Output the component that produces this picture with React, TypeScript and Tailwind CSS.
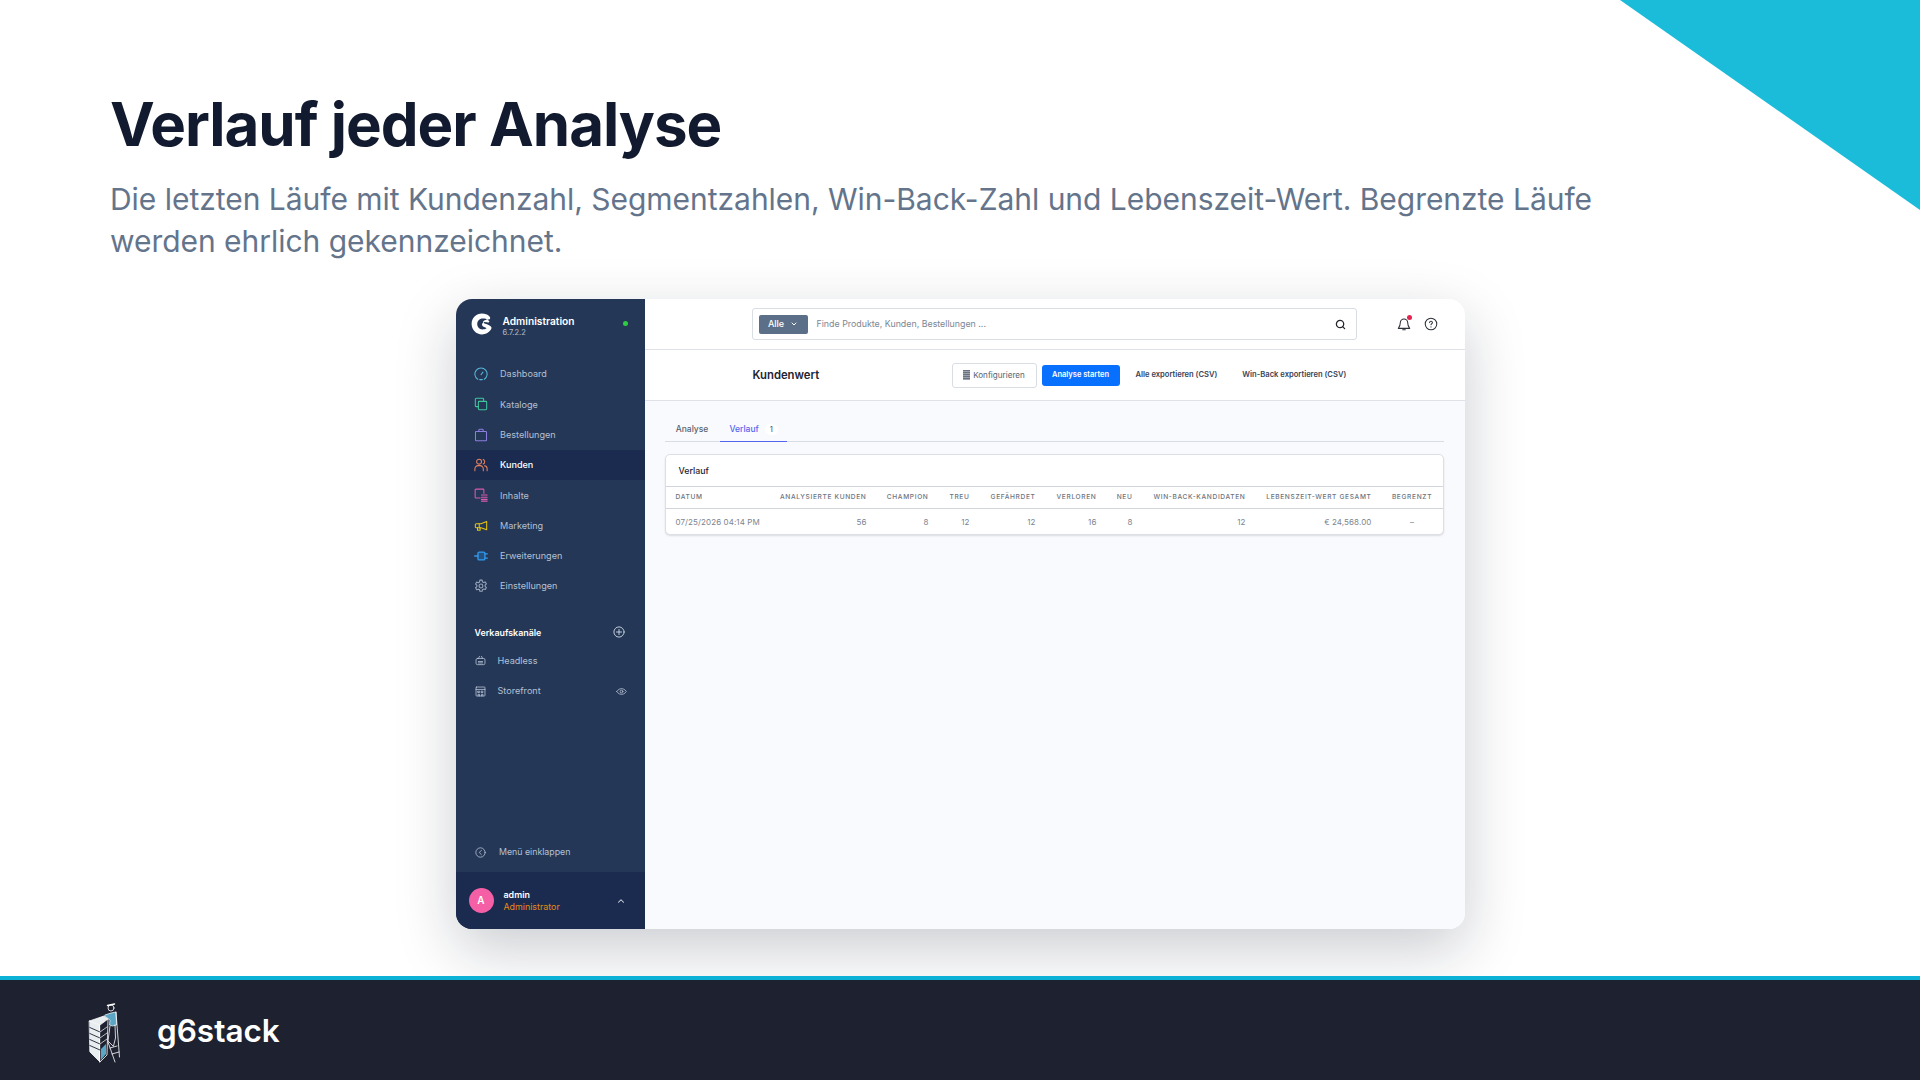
import { ChevronDown, ChevronUp, Search } from "lucide-react";
import type { ReactNode } from "react";

const font = "font-['Inter','Noto_Sans',sans-serif]";

function Ico({ className, children, size = 15 }: { className?: string; children: ReactNode; size?: number }) {
  return (
    <svg
      width={size}
      height={size}
      viewBox="0 0 16 16"
      fill="none"
      stroke="currentColor"
      strokeWidth="1.2"
      strokeLinecap="round"
      strokeLinejoin="round"
      className={className}
    >
      {children}
    </svg>
  );
}

const navItems: { label: string; color: string; active?: boolean; icon: ReactNode }[] = [
  {
    label: "Dashboard",
    color: "text-[#57b7d8]",
    icon: (
      <>
        <path d="M4.3 14A7 7 0 1 1 11.7 14" />
        <path d="M6.5 14.4h3" />
        <path d="M8 8.8l2.2-3" />
      </>
    ),
  },
  {
    label: "Kataloge",
    color: "text-[#3fc79c]",
    icon: (
      <>
        <path d="M5 11H2.5a1 1 0 0 1-1-1V2.5a1 1 0 0 1 1-1H10a1 1 0 0 1 1 1V5" />
        <rect x="5" y="5" width="9.5" height="9.5" rx="1" />
      </>
    ),
  },
  {
    label: "Bestellungen",
    color: "text-[#8c7fe0]",
    icon: (
      <>
        <path d="M2.5 4h11a.8.8 0 0 1 .8.8v9a.8.8 0 0 1-.8.8h-11a.8.8 0 0 1-.8-.8v-9a.8.8 0 0 1 .8-.8z" />
        <path d="M5.5 4V2.5a1 1 0 0 1 1-1h3a1 1 0 0 1 1 1V4" />
      </>
    ),
  },
  {
    label: "Kunden",
    color: "text-[#e8825f]",
    active: true,
    icon: (
      <>
        <circle cx="5.8" cy="4.2" r="2.8" />
        <path d="M1 14.5v-2.2a3.6 3.6 0 0 1 3.6-3.6h2.4a3.6 3.6 0 0 1 3.6 3.6v2.2" />
        <path d="M10.5 1.6a2.8 2.8 0 0 1 0 5.2" />
        <path d="M12 8.9a3.4 3.4 0 0 1 3 3.4v2.2" />
      </>
    ),
  },
  {
    label: "Inhalte",
    color: "text-[#d95bb0]",
    icon: (
      <>
        <path d="M7 11.5H2.3a1 1 0 0 1-1-1V2.3a1 1 0 0 1 1-1h8a1 1 0 0 1 1 1V6" />
        <path d="M8.5 8h6.5M8.5 10.5h6.5M8.5 13h6.5M8.5 15h6.5" />
      </>
    ),
  },
  {
    label: "Marketing",
    color: "text-[#e6c412]",
    icon: (
      <>
        <path d="M14.5 2.8v9.4L8 10H2.5a1 1 0 0 1-1-1V6.5a1 1 0 0 1 1-1H8z" />
        <path d="M4 10v2.8h3V10M6 5.5V10" />
      </>
    ),
  },
  {
    label: "Erweiterungen",
    color: "text-[#2f9bf0]",
    icon: (
      <>
        <rect x="4.5" y="3.5" width="8" height="9" rx="1.5" fill="currentColor" fillOpacity="0.25" strokeWidth="1.5" />
        <path d="M.8 8h3.7M12.5 5.5h2.7M12.5 10.5h2.7" strokeWidth="1.5" />
      </>
    ),
  },
  {
    label: "Einstellungen",
    color: "text-[#9aa8bd]",
    icon: (
      <>
        <circle cx="8" cy="8" r="2.2" />
        <path d="M6.7 1.3h2.6l.4 2 1.3.7 1.9-.7 1.3 2.3-1.5 1.3v1.6l1.5 1.3-1.3 2.3-1.9-.7-1.3.7-.4 2H6.7l-.4-2L5 11.6l-1.9.7-1.3-2.3 1.5-1.3V7.1L1.8 5.8l1.3-2.3 1.9.7 1.3-.7z" />
      </>
    ),
  },
];

const rows = [
  { label: "DATUM", value: "07/25/2026 04:14 PM", align: "text-left" },
  { label: "ANALYSIERTE KUNDEN", value: "56", align: "text-right" },
  { label: "CHAMPION", value: "8", align: "text-right" },
  { label: "TREU", value: "12", align: "text-right" },
  { label: "GEFÄHRDET", value: "12", align: "text-right" },
  { label: "VERLOREN", value: "16", align: "text-right" },
  { label: "NEU", value: "8", align: "text-right" },
  { label: "WIN-BACK-KANDIDATEN", value: "12", align: "text-right" },
  { label: "LEBENSZEIT-WERT GESAMT", value: "€ 24,568.00", align: "text-right" },
  { label: "BEGRENZT", value: "–", align: "pl-[20px] text-center" },
];

const gridCols = "grid-cols-[100px_91px_62px_41px_66px_61px_36px_113px_126px_61px]";

function Sidebar() {
  return (
    <aside className="flex w-[189px] shrink-0 flex-col bg-[#243757]">
      <div className="flex h-[50px] items-center pl-[15px] pr-[17px]">
        <svg width="22" height="22" viewBox="0 0 22 22" className="shrink-0">
          <path
            d="M18.5 3.4C16.5 1.5 14 .6 11 .6C5.2.6.6 5.2.6 11C.6 16.8 5.2 21.4 11 21.4C14.6 21.4 17.7 19.7 19.6 17C20.8 15.4 20.8 14 19.6 13.2C17.6 11.8 15.5 11 13.6 10.4C12.2 10 12.4 8.8 13.6 8.9C15 9 16 9.3 17.5 9.4C18.3 9.4 18.6 8.8 18.2 8.2C17.2 7 15.6 6.2 13.8 5.6C12.8 5.4 11.6 5.4 10.6 5.6C8 6.2 6.2 8.4 6.2 11C6.2 13.8 8.4 16.4 11.4 16.4C13 16.4 14.6 16 15.6 15.2C15 14.8 14 14.4 13 14C11.8 13.6 11 12.8 11 11.6C11 10.8 11.4 10.2 12 9.8C11.8 9 12.2 8 13.2 7.4C15 6.6 17 6.4 18.6 6.2C19.4 5.8 19.4 4.4 18.5 3.4Z"
            fill="#fff"
            fillRule="evenodd"
          />
        </svg>
        <div className="ml-[10px] mt-[3px] flex flex-1 flex-col">
          <span className="text-[10.2px] leading-[13px] font-semibold text-white">Administration</span>
          <span className="text-[7.5px] leading-[9px] text-[#b4c0d2]">6.7.2.2</span>
        </div>
        <span className="mb-[2px] h-[5px] w-[5px] rounded-full bg-[#2ecc40]" />
      </div>
      <nav className="mt-[10px] flex flex-col">
        {navItems.map((item) => (
          <div
            key={item.label}
            className={`flex h-[30.3px] items-center pl-[18px] ${item.active ? "bg-[#1a2b4f]" : ""}`}
          >
            <Ico className={`${item.color} shrink-0`} size={14}>
              {item.icon}
            </Ico>
            <span
              className={`ml-[12.5px] text-[9.1px] ${item.active ? "font-medium text-white" : "text-[#b4c0d2]"}`}
            >
              {item.label}
            </span>
          </div>
        ))}
      </nav>
      <div className="mt-[24px] flex h-[14px] items-center justify-between pl-[19px] pr-[20px]">
        <span className="text-[8.9px] font-semibold text-white">Verkaufskanäle</span>
        <Ico className="text-[#d5dce6]" size={12}>
          <circle cx="8" cy="8" r="6.8" />
          <path d="M8 4.6v6.8M4.6 8h6.8" />
        </Ico>
      </div>
      <div className="mt-[6px] flex h-[30px] items-center pl-[19px]">
        <Ico className="shrink-0 text-[#b4c0d2]" size={11}>
          <rect x="1.5" y="5" width="13" height="9" rx="2" />
          <path d="M5 5l1.5-3M11 5L9.5 2M5 9.5h6M5 11.5h6" />
        </Ico>
        <span className="ml-[12px] text-[9.1px] text-[#b4c0d2]">Headless</span>
      </div>
      <div className="flex h-[31.5px] items-center pl-[19px] pr-[18px]">
        <Ico className="shrink-0 text-[#b4c0d2]" size={11}>
          <rect x="1.5" y="1.5" width="13" height="13" rx="0.8" />
          <path d="M1.5 5h13M4.5 7.5h2v2h-2zM9.5 7.5h2v2h-2zM4.5 14.5v-2.5h2v2.5M9.5 14.5v-2.5h2v2.5" />
        </Ico>
        <span className="ml-[12px] flex-1 text-[9.1px] text-[#b4c0d2]">Storefront</span>
        <Ico className="text-[#b4c0d2]" size={11}>
          <path d="M1 8s2.5-4.2 7-4.2S15 8 15 8s-2.5 4.2-7 4.2S1 8 1 8z" />
          <circle cx="8" cy="8" r="2" />
        </Ico>
      </div>
      <div className="mb-[3px] mt-auto flex h-[34px] items-center pl-[19.5px]">
        <Ico className="shrink-0 text-[#b4c0d2]" size={11}>
          <circle cx="8" cy="8" r="6.8" />
          <path d="M9.2 5L6.2 8l3 3" />
        </Ico>
        <span className="ml-[13px] text-[8.8px] text-[#b4c0d2]">Menü einklappen</span>
      </div>
      <div className="flex h-[57px] items-center bg-[#1a2b4f] pl-[13px] pr-[19px]">
        <span className="flex h-[25px] w-[25px] items-center justify-center rounded-full bg-[#f45fa6] text-[10px] font-semibold text-white">
          A
        </span>
        <div className="ml-[10px] flex flex-1 flex-col">
          <span className="text-[8.9px] leading-[12px] font-semibold text-white">admin</span>
          <span className="text-[8.9px] leading-[12px] text-[#e88a12]">Administrator</span>
        </div>
        <ChevronUp size={10} strokeWidth={2.5} className="text-[#d5dce6]" />
      </div>
    </aside>
  );
}

function TopBar() {
  return (
    <div className="flex h-[51px] shrink-0 items-center border-b border-[#dfe3e9] pl-[107px] pr-[27px]">
      <div className="flex h-[32px] w-[605px] items-center rounded-[3px] border border-[#d9dde4] pl-[6px] pr-[10px]">
        <span className="flex h-[19px] w-[49px] items-center justify-center gap-[6px] rounded-[2px] bg-[#5b7088] text-[9px] font-medium text-white">
          Alle
          <ChevronDown size={8} strokeWidth={3} />
        </span>
        <span className="ml-[9px] flex-1 text-[8.85px] text-[#7d8794]">Finde Produkte, Kunden, Bestellungen ...</span>
        <Search size={11} strokeWidth={2.8} className="text-[#25262c]" />
      </div>
      <div className="relative ml-[40px]">
        <Ico className="text-[#2d3138]" size={14}>
          <path d="M8 2.2a4.2 4.2 0 0 0-4.2 4.2c0 4-1.6 5.8-2.3 6.6h13c-.7-.8-2.3-2.6-2.3-6.6A4.2 4.2 0 0 0 8 2.2z" />
          <path d="M6.5 14.6h3" />
        </Ico>
        <span className="absolute -right-[1px] -top-[2px] h-[5px] w-[5px] rounded-full bg-[#e5234f]" />
      </div>
      <Ico className="ml-[13px] text-[#2d3138]" size={14}>
        <circle cx="8" cy="8" r="6.6" />
        <path d="M6.4 6.4a1.6 1.6 0 1 1 2.4 1.4c-.5.3-.8.6-.8 1.1M8 11.2v.1" />
      </Ico>
    </div>
  );
}

function SmartBar() {
  return (
    <div className="flex h-[51px] shrink-0 items-center border-b border-[#dfe3e9] pl-[107px]">
      <span className="w-[200px] pl-px text-[11.3px] font-semibold text-[#1f2430]">Kundenwert</span>
      <span className="flex h-[25px] w-[85px] items-center justify-center gap-[3px] rounded-[3px] border border-[#d9dde4] text-[8.1px] text-[#59636f]">
        <span className="h-[10px] w-[7px] bg-[repeating-linear-gradient(to_bottom,#6b7280_0,#6b7280_1px,#9ca3af_1px,#9ca3af_2px)]" />
        Konfigurieren
      </span>
      <span className="ml-[5px] flex h-[21px] w-[78px] items-center justify-center rounded-[3px] bg-[#0870ff] text-[7.5px] font-semibold text-white">
        Analyse starten
      </span>
      <span className="ml-[16px] text-[7.6px] font-semibold text-[#3a4356]">Alle exportieren (CSV)</span>
      <span className="ml-[25px] text-[7.6px] font-semibold text-[#3a4356]">Win-Back exportieren (CSV)</span>
    </div>
  );
}

function HistoryCard() {
  return (
    <div className="mt-[12px] overflow-hidden rounded-[5px] border border-[#dcdfe5] bg-white shadow-[0_1px_2px_rgba(0,0,0,0.12)]">
      <div className="flex h-[32px] items-center border-b border-[#d2d6dc] pl-[13px] text-[8.8px] font-medium text-[#1f2430]">
        Verlauf
      </div>
      <div className={`grid ${gridCols} h-[22px] items-center border-b border-[#d2d6dc] px-[10px]`}>
        {rows.map((c) => (
          <span key={c.label} className={`whitespace-nowrap text-[6.6px] font-medium tracking-[0.65px] text-[#6d7480] ${c.align}`}>
            {c.label}
          </span>
        ))}
      </div>
      <div className={`grid ${gridCols} h-[25px] items-center px-[10px]`}>
        {rows.map((c) => (
          <span key={c.label} className={`whitespace-nowrap text-[8px] tracking-[0.1px] text-[#7d8490] ${c.align}`}>
            {c.value}
          </span>
        ))}
      </div>
    </div>
  );
}

export default function App() {
  return (
    <div className={`relative flex h-[1080px] w-[1920px] flex-col overflow-hidden bg-white ${font}`}>
      <svg className="absolute right-0 top-0" width="300" height="210" viewBox="0 0 300 210">
        <polygon points="0,0 300,0 300,210" fill="#1bbcda" />
      </svg>
      <main className="flex h-[976px] shrink-0 flex-col">
        <div className="px-[110px] pt-[88px]">
          <h1 className="text-[60px] leading-[72px] font-bold tracking-[-1px] text-[#111a2e]">Verlauf jeder Analyse</h1>
          <p className="mt-[18px] w-[1520px] text-[30px] leading-[42px] tracking-[-0.03px] text-[#64748b]">
            Die letzten Läufe mit Kundenzahl, Segmentzahlen, Win-Back-Zahl und Lebenszeit-Wert. Begrenzte Läufe werden ehrlich gekennzeichnet.
          </p>
        </div>
        <div className="mx-auto mt-[37px] flex h-[630px] w-[1009px] overflow-hidden rounded-[16px] bg-white shadow-[0_20px_60px_rgba(15,23,42,0.22)]">
          <Sidebar />
          <div className="flex min-w-0 flex-1 flex-col">
            <TopBar />
            <SmartBar />
            <div className="flex-1 bg-[#f9fafd] pl-[20px] pr-[21px]">
              <div className="flex h-[41px] items-end border-b border-[#d8dce3]">
                <span className="flex h-[23px] w-[55px] items-center justify-center text-[8.5px] font-medium text-[#59636f]">
                  Analyse
                </span>
                <span className="-mb-px flex h-[24px] w-[67px] items-center border-b border-[#5465f0] pl-[10px] text-[8.5px] font-medium text-[#5465f0]">
                  Verlauf
                  <span className="ml-[6px] rounded-full bg-white px-[5px] text-[7.5px] text-[#59636f]">1</span>
                </span>
              </div>
              <HistoryCard />
            </div>
          </div>
        </div>
      </main>
      <footer className="flex h-[104px] shrink-0 items-center border-t-4 border-[#0cb2d6] bg-[#1e2130] pl-[87px]">
        <svg className="mt-[7px]" width="36" height="62" viewBox="0 0 36 62" fill="none" strokeLinejoin="round" strokeLinecap="round">
          <path d="M2.5 18L17 13l4 3-8 6z" fill="#e8edf0" stroke="#fff" strokeWidth="0.8" />
          <path d="M2.5 18L13 22v37L3 49z" fill="#e8edf0" stroke="#fff" strokeWidth="0.8" />
          <path d="M13 22l8-6-1 36-7 7z" fill="#1e2130" stroke="#fff" strokeWidth="0.8" />
          <path d="M14 46l5-5v10l-5 6z" fill="#5aa6c4" />
          <path d="M2.8 24.5l10.2 4.5M2.8 30.5l10.2 4.5M2.8 36.5l10.2 4.5M2.8 42.5l10.2 4.5" stroke="#1e2130" strokeWidth="0.9" />
          <path d="M13 29l7-5M13 35l7-5M13 41l7-5" stroke="#fff" strokeWidth="0.7" />
          <path d="M18 12l6-2 5-1 .5 13-4 1-3-1 .5-5-4-3z" fill="#5aa6c4" stroke="#fff" strokeWidth="0.7" />
          <circle cx="24" cy="5" r="3" fill="#1e2130" stroke="#fff" strokeWidth="0.8" />
          <path d="M20.5 2.5l7-1.5" stroke="#fff" strokeWidth="1.4" />
          <path d="M23 23l-2 15 5 5M28 22l.5 13-2 8" stroke="#fff" strokeWidth="0.8" />
          <path d="M29 9l3.5 45M21 39l7 20M23 45l7-2M25 51l7-2" stroke="#fff" strokeWidth="0.8" />
        </svg>
        <span className="ml-[34px] pt-[2px] text-[31.5px] font-semibold text-white">g6stack</span>
      </footer>
    </div>
  );
}
